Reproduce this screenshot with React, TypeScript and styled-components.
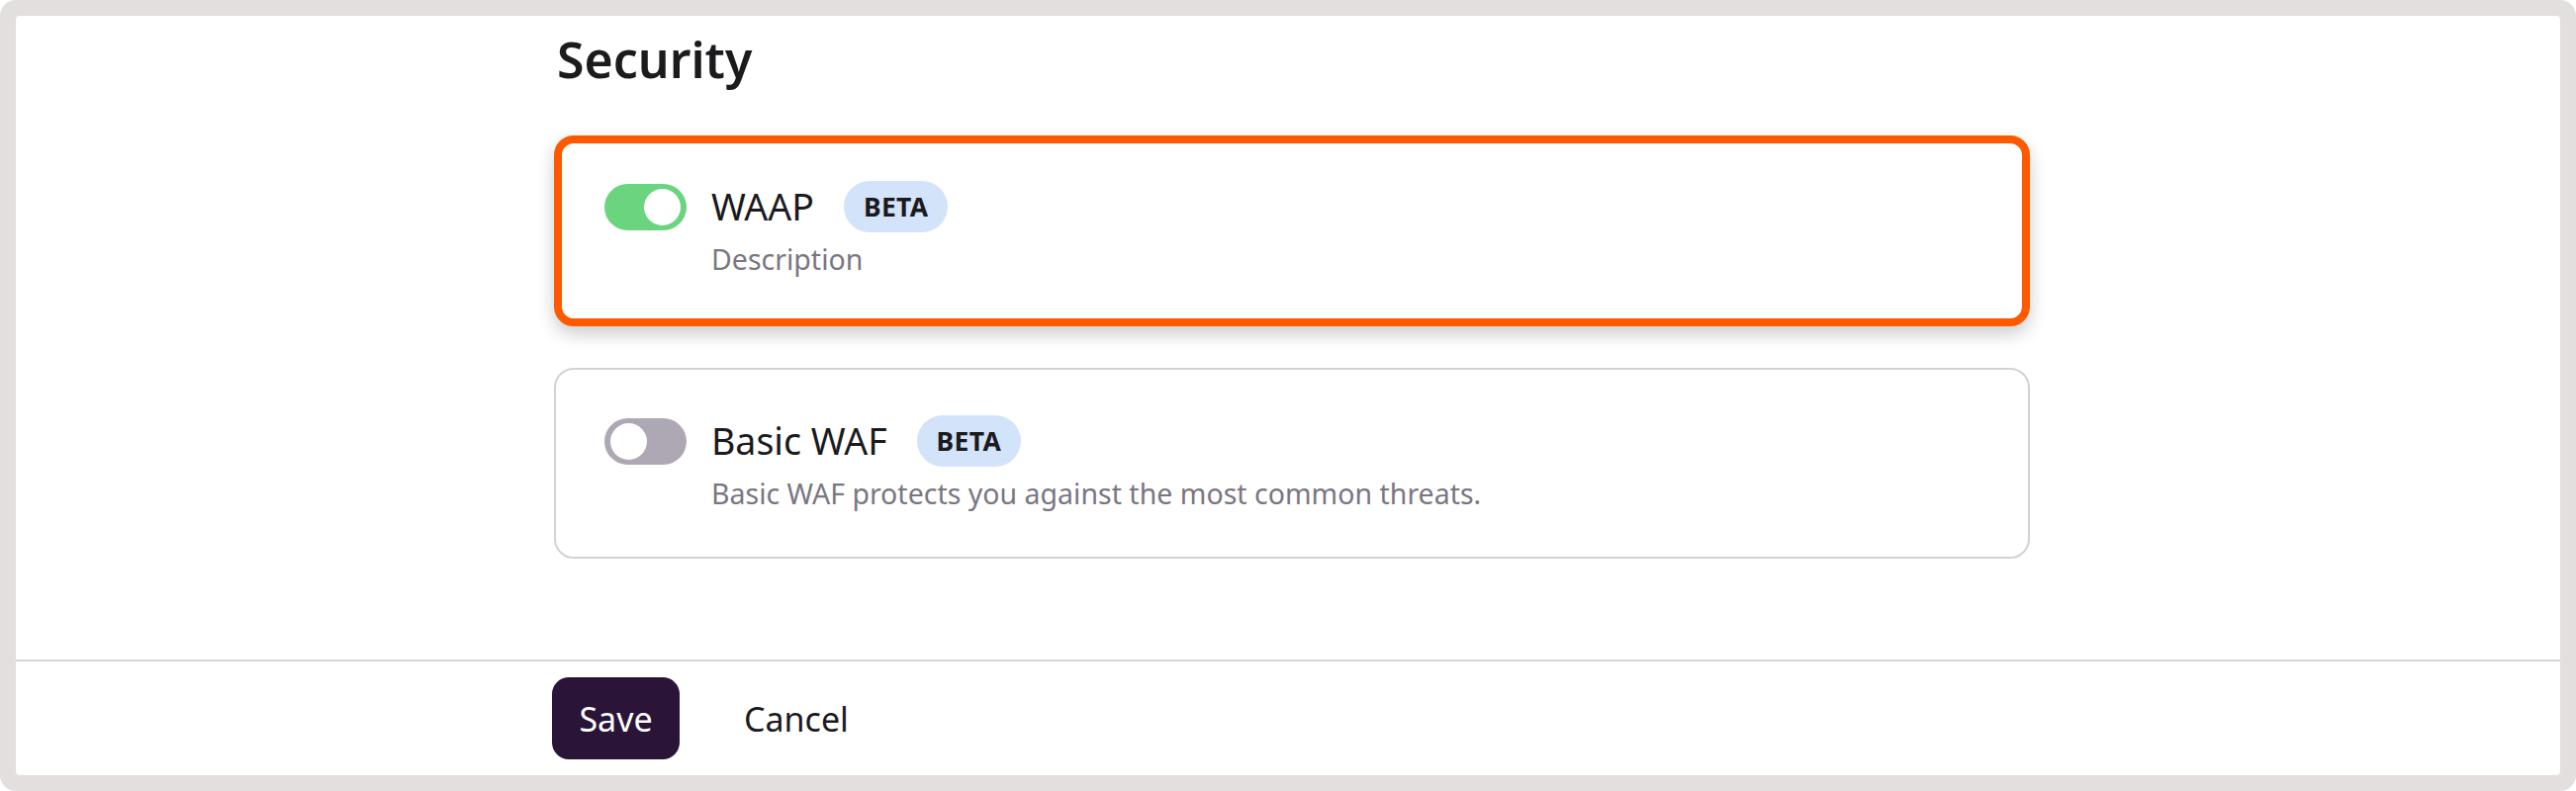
import styled, { createGlobalStyle } from "styled-components";

const GlobalStyle = createGlobalStyle`
    html, body {
        margin: 0;
        padding: 0;
        background: #ffffff;
    }
    * {
        box-sizing: border-box;
    }
    body {
        font-family: "Noto Sans", "Open Sans", sans-serif;
        color: #1b1a1d;
    }
`;

const Frame = styled.div`
    width: 2604px;
    height: 800px;
    padding: 16px;
    background: #e2dfde;
    border-radius: 16px;
`;

const Panel = styled.div`
    height: 100%;
    background: #ffffff;
    border-radius: 4px;
    display: flex;
    flex-direction: column;
`;

const Main = styled.main`
    flex: 1;
    padding: 8px 536px 0 544px;
`;

const Title = styled.h1`
    margin: 0 0 41px;
    font-size: 50px;
    font-weight: 600;
    line-height: 72px;
    color: #1b1a1d;
    padding-left: 3px;
`;

const Cards = styled.div`
    display: flex;
    flex-direction: column;
    gap: 42px;
`;

const Card = styled.div<{ $active?: boolean }>`
    height: 193px;
    border-radius: 20px;
    background: #ffffff;
    border: ${(props) => props.$active ? "8px solid #ff5900" : "2px solid #d3d1d7"};
    padding: ${(props) => props.$active ? "38px 43px" : "46px 49px"};
    box-shadow: ${(props) => props.$active ? "0 8px 18px rgba(0, 0, 0, 0.2)" : "none"};
    display: flex;
    gap: 25px;
`;

const Toggle = styled.div<{ $on?: boolean }>`
    flex: none;
    width: 83px;
    height: 47px;
    margin-top: 3px;
    border-radius: 24px;
    padding: 5px 6px;
    background: ${(props) => props.$on ? "#6bd47e" : "#aea8b4"};
    display: flex;
    justify-content: ${(props) => props.$on ? "flex-end" : "flex-start"};
    &::after {
        content: "";
        width: 37px;
        height: 37px;
        border-radius: 50%;
        background: #ffffff;
    }
`;

const Body = styled.div`
    display: flex;
    flex-direction: column;
    gap: 7px;
`;

const HeadRow = styled.div`
    display: flex;
    align-items: center;
    gap: 30px;
    height: 52px;
`;

const Name = styled.span`
    font-size: 37.5px;
    font-weight: 400;
    color: #1b1a1d;
    line-height: 52px;
`;

const Badge = styled.span`
    height: 52px;
    padding: 0 20px;
    border-radius: 26px;
    background: #d3e4fa;
    font-size: 26.5px;
    font-weight: 700;
    line-height: 52px;
    color: #1b1a1d;
    letter-spacing: 0.3px;
`;

const Description = styled.p`
    margin: 0;
    font-size: 28.5px;
    line-height: 40px;
    color: #7a7681;
`;

const Footer = styled.footer`
    flex: none;
    height: 117px;
    border-top: 2px solid #d6d4da;
    padding: 16px 0 0 542px;
    display: flex;
    align-items: flex-start;
    gap: 38px;
`;

const Button = styled.button<{ $primary?: boolean }>`
    height: 83px;
    min-width: ${(props) => props.$primary ? "129px" : "0"};
    padding: 0 27px;
    border: none;
    border-radius: 17px;
    font-family: "Noto Sans", "Open Sans", sans-serif;
    font-size: 34px;
    font-weight: 400;
    cursor: pointer;
    background: ${(props) => props.$primary ? "#2a1538" : "transparent"};
    color: ${(props) => props.$primary ? "#ffffff" : "#1b1a1d"};
`;

const features = [
    { name: "WAAP", description: "Description", on: true, active: true },
    { name: "Basic WAF", description: "Basic WAF protects you against the most common threats.", on: false, active: false },
];

function App() {
    return (
        <>
            <GlobalStyle />
            <Frame>
                <Panel>
                    <Main>
                        <Title>Security</Title>
                        <Cards>
                            {features.map((f) => (
                                <Card key={f.name} $active={f.active}>
                                    <Toggle $on={f.on} />
                                    <Body>
                                        <HeadRow>
                                            <Name>{f.name}</Name>
                                            <Badge>BETA</Badge>
                                        </HeadRow>
                                        <Description>{f.description}</Description>
                                    </Body>
                                </Card>
                            ))}
                        </Cards>
                    </Main>
                    <Footer>
                        <Button $primary>Save</Button>
                        <Button>Cancel</Button>
                    </Footer>
                </Panel>
            </Frame>
        </>
    );
}

export default App;
